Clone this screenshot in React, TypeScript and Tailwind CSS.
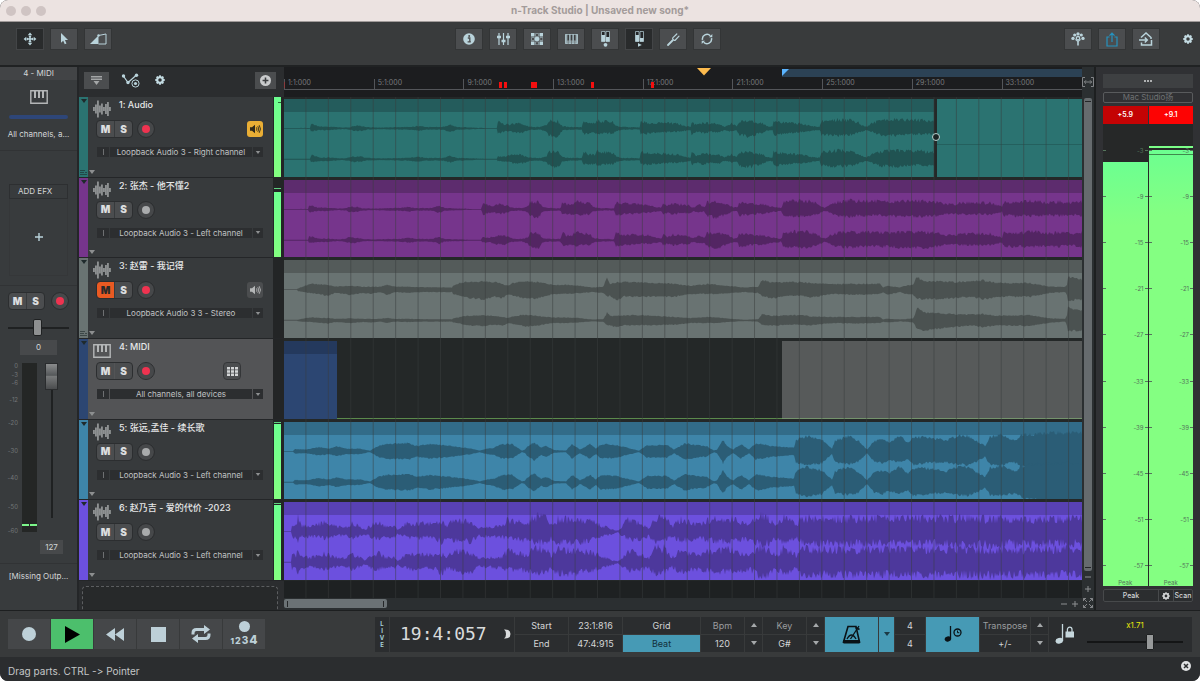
import type { ReactNode } from "react";
import clsx from "clsx";

type Point = [x: number, up: number, down?: number, second?: number];

interface Track {
  name: string;
  kind: "audio" | "midi";
  strip: string;
  device: string;
  armed: boolean;
  muted?: boolean;
  monitor?: "on" | "off";
  keypad?: boolean;
  routed?: boolean;
  level: number;
  peak?: number;
}

const LANE_WIDTH = 798;
const LANE_HEIGHT = 78;

const tracks: Track[] = [
  { name: "1: Audio", kind: "audio", strip: "bg-[#2b7371]", device: "Loopback Audio 3 - Right channel", armed: true, monitor: "on", routed: true, level: 100, peak: 92 },
  { name: "2: 张杰 - 他不懂2", kind: "audio", strip: "bg-[#76358c]", device: "Loopback Audio 3 - Left channel", armed: false, level: 82, peak: 86 },
  { name: "3: 赵雷 - 我记得", kind: "audio", strip: "bg-[#697372]", device: "Loopback Audio 3 3 - Stereo", armed: true, muted: true, monitor: "off", routed: true, level: 0 },
  { name: "4: MIDI", kind: "midi", strip: "bg-[#2c4672]", device: "All channels, all devices", armed: true, keypad: true, level: 0 },
  { name: "5: 张远,孟佳 - 续长歌", kind: "audio", strip: "bg-[#3e85a9]", device: "Loopback Audio 3 - Left channel", armed: false, level: 94, peak: 96 },
  { name: "6: 赵乃吉 - 爱的代价 -2023", kind: "audio", strip: "bg-[#6c50de]", device: "Loopback Audio 3 - Left channel", armed: false, level: 94, peak: 96 },
];

// envelope key points: x, level above the axis, level below, scale of the second channel
const songA: Point[] = [
  [0, 0.5], [26, 0.6], [27, 5, 4], [36, 2.2], [46, 2], [59, 1], [67, 1.6, 1.6, 1.4], [70, 3.4, 3], [78, 3], [84, 1.5], [96, 1],
  [126, 1.8], [134, 3], [143, 1.6], [159, 1.6], [167, 4.2], [173, 1.6], [189, 1], [201, 0.6], [213, 0.4],
  [214, 8.5, 6.5, 0.4], [221, 5, 4, 0.6], [226, 4.5, 4], [233, 6.5, 5.5], [239, 5], [246, 2], [256, 1.5], [263, 4], [265, 9, 8],
  [274, 9, 10], [279, 2.6], [285, 1.8], [298, 1.4], [300, 10, 7], [304, 6], [311, 6], [314, 10, 7], [324, 8, 6], [329, 8, 6], [333, 3], [338, 1.8],
  [356, 1.2], [357, 9, 7], [366, 7, 6], [379, 7, 5], [389, 6, 4], [394, 6, 4], [401, 3], [407, 2], [408, 8, 7], [413, 4], [419, 7, 6],
  [429, 6, 4], [436, 5], [441, 2], [448, 6, 4], [453, 2.5], [456, 9, 8], [466, 9, 10], [479, 6, 5], [484, 2.4], [489, 2.4],
  [490, 9, 8], [503, 7, 6], [516, 6, 5], [528, 3], [536, 1.8], [538, 9, 8], [554, 11, 9], [566, 10, 8], [574, 8, 6], [578, 4],
  [583, 2], [588, 6, 4], [596, 9, 8], [609, 11, 9], [623, 10, 8], [636, 10, 7], [652, 9, 8],
];

const songB: Point[] = [
  ...songA.map(([x, ...rest]): Point => [x * 0.928, ...rest]),
  [620, 10, 9], [649, 10, 9], [659, 7, 6], [669, 6, 5], [679, 8, 6], [706, 8, 6], [718, 3], [720, 9, 8], [736, 9, 8], [749, 11, 8],
  [763, 8, 7], [776, 10, 8], [786, 8, 6], [798, 10, 8],
];

const songC: Point[] = [
  [0, 0.4, 0.4, 0.6], [13, 0.4, 0.4, 0.6], [14, 1, 2, 0.6], [26, 6, 4, 0.5], [44, 5, 7, 0.5], [51, 3, 4, 0.5], [66, 4, 6, 0.5],
  [79, 3, 4, 0.5], [86, 3, 5, 0.5], [96, 3, 3, 0.5], [103, 5, 6, 0.5], [111, 3, 3, 0.5], [123, 3, 4, 0.5], [139, 2.4, 3, 0.5],
  [168, 2, 3, 0.5], [169, 4, 5, 0.5], [176, 7, 7, 0.5], [183, 8, 9, 0.6], [199, 9, 11, 0.6], [211, 8, 8, 0.6], [218, 6, 10, 0.6],
  [224, 4, 6, 0.6], [229, 7, 7, 0.6], [241, 9, 10, 0.7], [253, 8, 10, 0.6], [269, 5, 5, 0.6], [283, 5, 5, 0.6], [296, 4, 4, 0.6],
  [308, 2, 3, 0.4], [319, 3, 4, 0.4], [323, 12, 8, 0.7], [326, 6, 7, 0.8], [333, 8, 12, 0.6], [339, 8, 8, 0.7], [359, 8, 8, 0.7],
  [391, 6, 8, 0.6], [406, 4, 5, 0.6], [426, 6, 5, 0.6], [433, 5, 5, 0.6], [461, 2, 3, 0.3], [474, 3, 4, 0.4], [478, 10, 7, 0.7],
  [488, 8, 10, 0.6], [503, 8, 7, 0.7], [519, 8, 7, 0.7], [526, 7, 9, 0.6], [549, 6, 5, 0.6], [573, 6, 6, 0.6], [596, 6, 5, 0.6],
  [599, 2, 3, 0.5], [604, 4, 6, 0.4], [616, 2, 3, 0.4], [621, 4, 5, 0.3], [629, 5, 6, 0.4], [633, 14, 10, 1], [639, 9, 11, 1],
  [651, 9, 11, 0.9], [674, 8, 9, 0.8], [688, 9, 8, 0.7], [699, 10, 11, 0.7], [713, 7, 8, 0.7], [746, 7, 8, 0.8], [766, 3, 4, 0.7],
  [781, 3, 3, 0.5], [783, 5, 6, 1], [784, 14, 12, 1], [798, 11, 11, 1],
];

const songD: Point[] = [
  [0, 0.5], [9, 0.5], [11, 2.6], [22, 2], [35, 4.6], [45, 3], [53, 5.4], [63, 3], [76, 3], [86, 0.8], [94, 6], [102, 8], [125, 9],
  [133, 6], [146, 8], [166, 6], [187, 3], [196, 1], [203, 3], [210, 4], [218, 8], [228, 8], [238, 0.8], [241, 2], [243, 5], [250, 10],
  [257, 4], [262, 6], [270, 1.5], [282, 1], [288, 8], [296, 2], [306, 8], [312, 3], [317, 8], [332, 7], [355, 0.8], [363, 7],
  [383, 7], [390, 2], [401, 9], [411, 7], [422, 6], [430, 1], [433, 2], [439, 13], [443, 6], [449, 2], [457, 8], [465, 2],
  [472, 9], [487, 6], [510, 4], [512, 13], [523, 17, 15], [538, 13], [548, 3], [551, 12], [564, 17, 14], [574, 12], [583, 2],
  [590, 11], [598, 13], [605, 10], [616, 17, 12], [624, 9], [629, 15], [642, 16, 13], [662, 12], [673, 17, 14], [683, 17, 15],
  [693, 11], [701, 6], [706, 16, 14], [717, 18, 15], [732, 12], [737, 18, 17], [755, 20], [771, 21], [798, 21],
];

const songE: Point[] = [
  [0, 0.5], [7, 0.5], [8, 11, 9], [12, 8, 8], [14, 19, 15], [17, 8, 8], [27, 6, 7], [40, 12, 9], [53, 6, 6], [63, 6, 6],
  [68, 11, 9], [81, 3, 4], [89, 9, 9], [94, 13, 10], [102, 6, 7], [110, 7, 8], [114, 2, 4], [122, 10, 8], [133, 11, 10], [146, 10, 7],
  [159, 11, 15], [163, 6, 7], [169, 15, 12], [187, 12, 13], [195, 5, 6], [218, 7, 8], [223, 15, 10], [244, 10, 12], [249, 20, 14],
  [262, 19, 15], [267, 8, 9], [275, 18, 16], [290, 15, 15], [306, 14, 12], [316, 9, 8], [327, 3, 4], [334, 1, 1], [337, 5, 5],
  [345, 17, 11], [357, 10, 11], [365, 5, 6], [370, 20, 16], [381, 19, 12], [388, 6, 6], [396, 16, 13], [414, 9, 9], [425, 15, 12],
  [445, 17, 14], [466, 9, 10], [474, 22, 17], [484, 18, 17], [492, 8, 9], [500, 20, 15], [512, 9, 9], [518, 18, 16], [560, 17, 17],
  [610, 17, 16], [660, 18, 17], [700, 17, 18], [750, 16, 17], [798, 19, 16],
];

const sample = (points: Point[], x: number) => {
  const next = points.findIndex((p) => p[0] > x);
  const b = points[next < 0 ? points.length - 1 : next];
  const a = points[Math.max(0, (next < 0 ? points.length : next) - 1)];
  const t = b[0] === a[0] ? 0 : (x - a[0]) / (b[0] - a[0]);
  const mix = (from: number, to: number) => from + (to - from) * t;
  return {
    up: mix(a[1], b[1]),
    down: mix(a[2] ?? a[1], b[2] ?? b[1]),
    second: mix(a[3] ?? 1, b[3] ?? 1),
  };
};

const noise = (n: number) => {
  const v = Math.sin(n * 127.1 + 311.7) * 43758.5453;
  return v - Math.floor(v);
};

function wavePath(points: Point[], width: number, axis: number, channel: number, rough: number) {
  const top: string[] = [];
  const bottom: string[] = [];
  for (let x = 0; x <= width; x += 1) {
    const s = sample(points, x);
    const scale = channel === 1 ? s.second : 1;
    const up = s.up * scale * (1 - rough * noise(x + channel * 900));
    const down = s.down * scale * (1 - rough * noise(x + 5000 + channel * 900));
    top.push(`${x} ${(axis - Math.max(up, 0.4)).toFixed(1)}`);
    bottom.unshift(`${x} ${(axis + Math.max(down, 0.4)).toFixed(1)}`);
  }
  return `M${top.join("L")}L${bottom.join("L")}Z`;
}

function Waveform({ points, width = LANE_WIDTH, rough = 0.4, className }: { points: Point[]; width?: number; rough?: number; className: string }) {
  return (
    <svg viewBox={`0 0 ${width} ${LANE_HEIGHT}`} preserveAspectRatio="none" className={clsx("absolute inset-0 size-full", className)} fill="currentColor" aria-hidden="true">
      <path d={wavePath(points, width, 29.5, 0, rough)} />
      <path d={wavePath(points, width, 60.5, 1, rough)} />
    </svg>
  );
}

function Clip({ body, header, children, className }: { body: string; header: string; children?: ReactNode; className?: string }) {
  return (
    <div className={clsx("relative overflow-hidden", body, className)}>
      <div className={clsx("h-[13px]", header)} />
      {children}
    </div>
  );
}

function Triangle({ up, className }: { up?: boolean; className?: string }) {
  return (
    <svg viewBox="0 0 6 4" className={clsx("h-1 w-1.5", className)} fill="currentColor" aria-hidden="true">
      <path d={up ? "M0 4L3 0L6 4Z" : "M0 0L3 4L6 0Z"} />
    </svg>
  );
}

function GearIcon({ className }: { className?: string }) {
  return (
    <svg viewBox="0 0 20 20" className={className} aria-hidden="true">
      <circle cx="10" cy="10" r="5.5" fill="none" stroke="currentColor" strokeWidth="4" />
      {[0, 45, 90, 135].map((a) => (
        <g key={a} transform={`rotate(${a} 10 10)`} fill="currentColor">
          <rect x="8" y="0.5" width="4" height="4" rx="1" />
          <rect x="8" y="15.5" width="4" height="4" rx="1" />
        </g>
      ))}
    </svg>
  );
}

function PianoIcon({ className }: { className?: string }) {
  return (
    <svg viewBox="0 0 18 14" className={className} aria-hidden="true">
      <path d="M.8.8h16.4v12.4H.8z" fill="none" stroke="currentColor" strokeWidth="1.4" />
      <path d="M4 1v7h2V1zM8 1v7h2V1zM12 1v7h2V1z" fill="currentColor" />
    </svg>
  );
}

function WaveIcon({ className }: { className?: string }) {
  const bars = [4, 9, 17, 7, 11, 4, 10, 14, 4];
  return (
    <svg viewBox="0 0 18 18" className={className} fill="currentColor" aria-hidden="true">
      {bars.map((h, i) => (
        <rect key={i} x={i * 2 + 0.3} y={9 - h / 2} width="1.3" height={h} />
      ))}
    </svg>
  );
}

function SpeakerIcon() {
  return (
    <svg viewBox="0 0 12 10" className="h-2.5 w-3" aria-hidden="true">
      <path d="M1 3.3h2L6 .8v8.4L3 6.7H1z" fill="currentColor" />
      <path d="M7.4 3.4q1.2 1.6 0 3.2M8.8 2.2q2 2.8 0 5.6M10.2 1.2q2.6 3.8 0 7.6" fill="none" stroke="currentColor" strokeWidth=".9" />
    </svg>
  );
}

const toolIcons = {
  move: (
    <svg viewBox="0 0 14 14" className="size-3.5" fill="currentColor" aria-hidden="true">
      <path d="M7 .6L9.300 3.300H4.700zM7 13.400L4.700 10.700h4.600zM.6 7L3.300 4.700v4.600zM13.400 7L10.700 9.300V4.700z" />
      <circle cx="7" cy="4.700" r="1.200" /><circle cx="7" cy="9.300" r="1.200" /><circle cx="4.700" cy="7" r="1.200" /><circle cx="9.300" cy="7" r="1.200" /><circle cx="7" cy="7" r="1.200" />
    </svg>
  ),
  pointer: (
    <svg viewBox="0 0 10 14" className="h-3 w-2.5" fill="currentColor" aria-hidden="true"><path d="M1.5 0v11.4l2.6-2.4 1.8 4.2 2-.9L6.100 8.300h3.600z" /></svg>
  ),
  fade: (
    <svg viewBox="0 0 18 12" className="h-3 w-[18px]" aria-hidden="true">
      <path d="M1 11L9.500 2.500V11z" fill="currentColor" /><path d="M9.500 2.500L17 1V11H9.500" fill="none" stroke="currentColor" /><circle cx="9.500" cy="2.500" r="1.200" fill="currentColor" />
    </svg>
  ),
  info: (
    <svg viewBox="0 0 12 12" className="size-3" aria-hidden="true">
      <circle cx="6" cy="6" r="5.800" fill="currentColor" /><path d="M4.800 5h2v3.600h.900M4.600 8.800h3.200" stroke="#4b4d4f" strokeWidth="1.300" fill="none" /><circle cx="6.200" cy="2.900" r="1" fill="#4b4d4f" />
    </svg>
  ),
  mixer: (
    <svg viewBox="0 0 13 12" className="h-3 w-[13px]" stroke="currentColor" strokeWidth="1.200" aria-hidden="true">
      <path d="M2 0v12M6.500 0v12M11 0v12" /><path d="M0 4h4M4.500 8h4M9 4h4" strokeWidth="2.400" />
    </svg>
  ),
  pads: (
    <svg viewBox="0 0 12 12" className="size-3" aria-hidden="true">
      <path d="M0 0h3.500v3.500H0zM8.500 0H12v3.500H8.500zM4.300 4.300h3.500v3.500H4.300zM0 8.500h3.500V12H0zM8.500 8.500H12V12H8.500z" fill="currentColor" />
      <path d="M4.500.5h3v3h-3zM.5 4.500h3v3h-3zM8.800 4.500h3v3h-3zM4.500 8.800h3v3h-3z" fill="none" stroke="currentColor" strokeWidth=".7" opacity=".7" />
      <circle cx="6" cy="6" r="2.300" fill="currentColor" />
    </svg>
  ),
  keys: (
    <svg viewBox="0 0 13 10" className="h-2.5 w-[13px]" aria-hidden="true">
      <path d="M.4.4h12.200v9.200H.4z" fill="currentColor" fillOpacity=".7" stroke="currentColor" strokeWidth=".8" />
      <path d="M2.400 .8h1.600v5.600H2.400zM5.700 .8h1.600v5.600H5.700zM9 .8h1.600v5.600H9z" fill="#3c3e40" /><path d="M3.200 6v4M6.500 6v4M9.800 6v4" stroke="#5a5c5e" strokeWidth=".6" />
    </svg>
  ),
  recordMeter: (
    <svg viewBox="0 0 9 16" className="h-4 w-[9px]" aria-hidden="true">
      <path d="M.5.5h3.500v10H.5zM5 .5h3.500v10H5z" fill="#242628" stroke="currentColor" strokeWidth=".7" /><path d="M.5 4h3.500v6.500H.5zM5 6h3.500v4.500H5z" fill="currentColor" /><circle cx="4.500" cy="13.800" r="1.900" fill="currentColor" />
    </svg>
  ),
  playMeter: (
    <svg viewBox="0 0 9 16" className="h-4 w-[9px]" aria-hidden="true">
      <path d="M.5.5h3.500v10H.5zM5 .5h3.500v10H5z" fill="#242628" stroke="currentColor" strokeWidth=".7" /><path d="M.5 4h3.500v6.500H.5zM5 7h3.500v3.500H5z" fill="currentColor" /><path d="M3 12l3.800 1.900L3 15.800z" fill="currentColor" />
    </svg>
  ),
  tuner: (
    <svg viewBox="0 0 13 13" className="size-[13px]" fill="none" stroke="currentColor" strokeLinecap="round" aria-hidden="true">
      <path d="M1 12L5.500 7.500" strokeWidth="1.800" /><path d="M9.800 1L6 4.600C4.700 5.800 7.200 8.400 8.400 7L12 3.200" strokeWidth="1.200" />
    </svg>
  ),
  sync: (
    <svg viewBox="0 0 12 12" className="size-3" aria-hidden="true">
      <path d="M1.500 6.800A4.600 4.600 0 0 1 9.300 2.800M10.500 5.200A4.600 4.600 0 0 1 2.700 9.200" fill="none" stroke="currentColor" strokeWidth="1.500" /><path d="M8 4.300h3.300V1zM4 7.700H.7V11z" fill="currentColor" />
    </svg>
  ),
  community: (
    <svg viewBox="0 0 14 14" className="size-3.5" fill="currentColor" aria-hidden="true">
      <circle cx="7" cy="1.900" r="1.700" /><circle cx="3.700" cy="3" r="1.600" /><circle cx="10.300" cy="3" r="1.600" /><circle cx="2" cy="6.400" r="1.700" /><circle cx="12" cy="6.400" r="1.700" /><circle cx="7" cy="6.200" r="1.700" fill="none" stroke="currentColor" strokeWidth="1.300" /><path d="M6.200 8h1.600v5.500H6.200z" /><path d="M4.200 7.500L6.500 9.500M9.800 7.500L7.500 9.500" stroke="currentColor" strokeWidth="1" />
    </svg>
  ),
  share: (
    <svg viewBox="0 0 12 15" className="h-[15px] w-3" fill="none" stroke="currentColor" strokeWidth="1.200" aria-hidden="true">
      <path d="M3.500 5H1v9h10V5H8.500M6 10V1.200M3.500 3.700L6 1.200l2.500 2.500" />
    </svg>
  ),
  exportHome: (
    <svg viewBox="0 0 16 14" className="h-3.5 w-4" fill="none" stroke="currentColor" strokeWidth="1.500" aria-hidden="true">
      <path d="M3 5.500L8 1l5 4.500V7M3.500 10.500V13h10V8M1 8h8M6.800 5.500L9.300 8l-2.500 2.500" />
    </svg>
  ),
};

function ToolButton({ label, active, accent, children }: { label: string; active?: boolean; accent?: boolean; children: ReactNode }) {
  return (
    <button
      aria-label={label}
      className={clsx(
        "flex h-[22px] w-7 items-center justify-center border",
        active ? "border-[#434547] bg-[#292b2c]" : "border-[#333536] bg-[#4b4d4f]",
        accent ? "text-[#2593c0]" : "text-[#b9d3db]"
      )}
    >
      {children}
    </button>
  );
}

function MuteSolo({ muted }: { muted?: boolean }) {
  const base = "h-4 w-[17px] text-[10px] leading-[15px] font-black";
  return (
    <div className="flex gap-px rounded-[3px] outline outline-[#2c2e30]">
      <button aria-label="Mute" className={clsx(base, "rounded-l-[2px]", muted ? "bg-[#ea5a22] text-[#2a2a2a]" : "bg-[#4b4d4f] text-[#dcdedf]")}>M</button>
      <button aria-label="Solo" className={clsx(base, "rounded-r-[2px] bg-[#4b4d4f] text-[#dcdedf]")}>S</button>
    </div>
  );
}

function RecordButton({ armed }: { armed: boolean }) {
  return (
    <button aria-label="Arm for recording" className="flex size-4 items-center justify-center rounded-full bg-[#46484a] outline outline-[#2c2e30]">
      <span className={clsx("size-2 rounded-full", armed ? "bg-[#ef3350]" : "bg-[#a9abac]")} />
    </button>
  );
}

function Titlebar() {
  return (
    <header className="relative flex h-[22px] items-center justify-center border-b border-[#a09a99] bg-[#ece3e1]">
      <div className="absolute left-1.5 flex gap-[5px]">
        <span className="size-2.5 rounded-full bg-[#cfc4c3]" />
        <span className="size-2.5 rounded-full bg-[#cfc4c3]" />
        <span className="size-2.5 rounded-full bg-[#cfc4c3]" />
      </div>
      <h1 className="text-[10px] font-bold text-[#a39b9a]">n-Track Studio | Unsaved new song*</h1>
    </header>
  );
}

function Toolbar() {
  return (
    <nav className="flex h-[43px] items-start justify-between bg-[#393b3c] pt-1.5 pr-[7px] pl-4">
      <div className="flex gap-1.5">
        <ToolButton label="Move" active>{toolIcons.move}</ToolButton>
        <ToolButton label="Pointer">{toolIcons.pointer}</ToolButton>
        <ToolButton label="Fade">{toolIcons.fade}</ToolButton>
      </div>
      <div className="flex gap-1.5">
        <ToolButton label="Info">{toolIcons.info}</ToolButton>
        <ToolButton label="Mixer">{toolIcons.mixer}</ToolButton>
        <ToolButton label="Step sequencer">{toolIcons.pads}</ToolButton>
        <ToolButton label="Keyboard">{toolIcons.keys}</ToolButton>
        <ToolButton label="Input meters">{toolIcons.recordMeter}</ToolButton>
        <ToolButton label="Output meters" active>{toolIcons.playMeter}</ToolButton>
        <ToolButton label="Tuner">{toolIcons.tuner}</ToolButton>
        <ToolButton label="Sync">{toolIcons.sync}</ToolButton>
      </div>
      <div className="flex items-center gap-1.5">
        <ToolButton label="Community">{toolIcons.community}</ToolButton>
        <ToolButton label="Share" accent>{toolIcons.share}</ToolButton>
        <ToolButton label="Export">{toolIcons.exportHome}</ToolButton>
        <button aria-label="Settings" className="ml-[17px] text-[#c3dbe2]">
          <GearIcon className="size-[10px]" />
        </button>
      </div>
    </nav>
  );
}

// label and the share of the fader's travel down to the next one
const faderScale: [string, number][] = [["0", 9], ["-3", 8], ["-6", 17], ["-12", 23], ["-20", 28], ["-30", 28], ["-40", 29], ["-50", 24], ["-60", 4]];

function ChannelStrip() {
  return (
    <aside className="flex w-[79px] shrink-0 flex-col border-r-2 border-[#242628] bg-[#383b3d] text-[8px] text-[#d4d6d7]">
      <div className="h-[13px] bg-[#424446] text-center text-[8px] leading-[13px]">4 - MIDI</div>
      <PianoIcon className="mx-auto mt-[10px] h-3.5 w-[18px] text-[#b4b6b7]" />
      <div className="mx-[9px] mt-[11px] h-1 rounded-sm bg-[#2e4678]" />
      <p className="mt-[9px] text-center leading-3 whitespace-nowrap">All channels, a...</p>
      <div className="mt-2.5 border-t border-[#313335]" />
      <div className="mx-[9px] mt-[33px] h-[15px] border border-[#2d2f31] pl-2 text-[8px] leading-[13px]">ADD EFX</div>
      <button aria-label="Add effect" className="mx-[9px] flex h-[77px] items-center justify-center border border-t-0 border-[#353739] text-[#b9d3db]">
        <svg viewBox="0 0 8 8" className="size-2" stroke="currentColor" strokeWidth="1.400" aria-hidden="true"><path d="M4 0v8M0 4h8" /></svg>
      </button>
      <div className="mt-[9px] border-t border-[#313335]" />
      <div className="mt-[7px] flex items-center justify-between pr-[9px] pl-[9px]">
        <MuteSolo />
        <RecordButton armed />
      </div>
      <input
        type="range"
        aria-label="Pan"
        defaultValue={49}
        className="mx-2 mt-[10px] h-[17px] appearance-none bg-[linear-gradient(#1f2122,#1f2122)] bg-size-[100%_2px] bg-center bg-no-repeat [&::-webkit-slider-thumb]:h-[17px] [&::-webkit-slider-thumb]:w-[9px] [&::-webkit-slider-thumb]:appearance-none [&::-webkit-slider-thumb]:rounded-[2px] [&::-webkit-slider-thumb]:border [&::-webkit-slider-thumb]:border-[#1f2122] [&::-webkit-slider-thumb]:bg-[#8e9091]"
      />
      <output className="mx-auto mt-1 h-[15px] w-[37px] bg-[#47494b] text-center leading-[15px]">0</output>
      <div className="mt-2 flex min-h-0 flex-1">
        <div className="flex w-[18px] flex-col text-right text-[6px] leading-none text-[#737678]">
          {faderScale.map(([label, span]) => (
            <div key={label} className="min-h-0 basis-0" style={{ flexGrow: span }}>{label}</div>
          ))}
        </div>
        <div className="ml-1 flex w-[15px] items-end gap-px bg-[#242625] pb-1.5">
          <div className="h-0.5 flex-1 bg-[#7cf58a]" />
          <div className="h-0.5 flex-1 bg-[#7cf58a]" />
        </div>
        <input
          type="range"
          aria-label="Volume"
          max={127}
          defaultValue={127}
          className="mb-3.5 ml-2 w-[13px] appearance-none bg-[linear-gradient(#1f2122,#1f2122)] bg-size-[2px_100%] bg-center bg-no-repeat [direction:rtl] [writing-mode:vertical-lr] [&::-webkit-slider-thumb]:h-[27px] [&::-webkit-slider-thumb]:w-[13px] [&::-webkit-slider-thumb]:appearance-none [&::-webkit-slider-thumb]:border [&::-webkit-slider-thumb]:border-[#2a2c2e] [&::-webkit-slider-thumb]:bg-[linear-gradient(#8a8c8d,#55585a_45%,#77797a_50%,#4a4c4e)]"
        />
      </div>
      <output className="mt-2 mr-3.5 h-[14px] w-[23px] self-end bg-[#47494b] text-center leading-[14px]">127</output>
      <div className="mt-[9px] border-t border-[#313335]" />
      <p className="mt-1.5 h-10 text-center leading-3 whitespace-nowrap">[Missing Outp...</p>
    </aside>
  );
}

function TrackRow({ track }: { track: Track }) {
  return (
    <li className="flex min-h-0 flex-1 border-b border-[#242628]">
      <div className={clsx("flex w-[9px] flex-col items-center justify-between py-0.5 text-[#1f2a2c]", track.strip)}>
        <Triangle />
        {track.routed && (
          <svg viewBox="0 0 7 5" className="h-[5px] w-[7px] opacity-60" stroke="currentColor" aria-hidden="true"><path d="M0 .5h5M0 2.500h4M0 4.500h7M5 2.500h2" /></svg>
        )}
      </div>
      <div className={clsx("flex min-w-0 flex-1 flex-col pt-[3px]", track.kind === "midi" ? "bg-[#535456]" : "bg-[#373a3c]")}>
        <div className="flex h-[21px] pl-[5px]">
          {track.kind === "midi" ? (
            <PianoIcon className="mt-0.5 h-3.5 w-[18px] text-[#b4b6b7]" />
          ) : (
            <WaveIcon className="size-[18px] text-[#b4b6b7]" />
          )}
          <span className="ml-2 text-[9px] leading-[10px] font-medium text-[#e6e7e8]">{track.name}</span>
        </div>
        <div className="flex h-4 items-center pr-[10px] pl-[9px]">
          <MuteSolo muted={track.muted} />
          <div className="ml-[6px]"><RecordButton armed={track.armed} /></div>
          {track.monitor && (
            <button
              aria-label="Monitor input"
              className={clsx("ml-auto flex size-4 items-center justify-center rounded-[3px]", track.monitor === "on" ? "bg-[#e9ae35] text-[#2f2a1a]" : "bg-[#4b4d4f] text-[#b4b6b7]")}
            >
              <SpeakerIcon />
            </button>
          )}
          {track.keypad && (
            <button aria-label="Open step editor" className="mr-[23px] ml-auto flex size-4 items-center justify-center rounded-[3px] bg-[#4b4d4f] text-[#d4d6d7] outline outline-[#343638]">
              <svg viewBox="0 0 11 9" className="h-[9px] w-[11px]" fill="currentColor" aria-hidden="true">
                <path d="M0 0h3v2.400H0zM4 0h3v2.400H4zM8 0h3v2.400H8zM0 3.300h3v2.400H0zM4 3.300h3v2.400H4zM8 3.300h3v2.400H8zM0 6.600h3V9H0zM4 6.600h3V9H4zM8 6.600h3V9H8z" />
              </svg>
            </button>
          )}
        </div>
        <div className="mt-[10px] mr-[10px] ml-[9px] flex h-[10px] gap-px">
          <button aria-label="Input options" className="flex w-3 items-center justify-center bg-[#2c2e30]">
            <span className="h-1.5 w-px bg-[#6e7072]" />
          </button>
          <select aria-label={`Input of ${track.name}`} className="min-w-0 flex-1 appearance-none bg-[#2c2e30] text-center text-[8px] leading-[10px] text-[#c0c2c3]">
            <option>{track.device}</option>
          </select>
          <span className="flex w-2.5 items-center justify-center bg-[#2c2e30] text-[#8d8f90]"><Triangle className="h-[3px]" /></span>
        </div>
        <Triangle className="mt-auto mb-[3px] ml-px text-[#8d8f90]" />
      </div>
      <div className="flex w-[11px] flex-col justify-end bg-[#232526] pr-[3px] pl-px">
        <div className="relative flex flex-1 flex-col justify-end">
          <div className="bg-linear-to-b from-[#6cff90] to-[#83ff80]" style={{ height: `${track.level}%` }} />
          {track.peak && (
            <div
              className={clsx("absolute inset-x-0 h-px", track.peak > track.level ? "bg-[#5fd080]" : "ml-1 bg-[#2a6a3a]")}
              style={{ bottom: `${track.peak}%` }}
            />
          )}
        </div>
      </div>
    </li>
  );
}

function TrackPanel() {
  return (
    <section className="flex w-[205px] shrink-0 flex-col bg-[#2b2d2f]">
      <div className="flex h-[30px] items-center bg-[#2b2d2f] pr-2 pb-1 pl-[5px]">
        <button aria-label="Track list options" className="flex h-[17px] w-[25px] items-center justify-center bg-[#4b4d4f] text-[#a4a6a7]">
          <svg viewBox="0 0 11 9" className="h-[9px] w-[11px]" fill="currentColor" aria-hidden="true"><path d="M0 0h11v1.500H0zM0 2.500h11V4H0zM2.500 5h6l-3 4z" /></svg>
        </button>
        <button aria-label="Automation" className="ml-3 text-[#b9d3db]">
          <svg viewBox="0 0 20 15" className="h-[15px] w-5" fill="none" stroke="currentColor" aria-hidden="true">
            <path d="M2 2.500L7 9.500L15.500 2" strokeWidth="1.200" />
            <g fill="currentColor" stroke="none"><circle cx="2.500" cy="3" r="1.700" /><circle cx="7" cy="9.500" r="1.700" /><circle cx="15.500" cy="2.200" r="1.700" /><circle cx="14.500" cy="10.500" r="1.600" /></g>
            <circle cx="14.500" cy="10.500" r="3.600" />
          </svg>
        </button>
        <button aria-label="Track settings" className="ml-[14px] text-[#c3dbe2]"><GearIcon className="size-[10px]" /></button>
        <button aria-label="Add track" className="ml-auto flex h-[17px] w-[21px] items-center justify-center bg-[#4b4d4f]">
          <svg viewBox="0 0 12 12" className="size-[11px]" aria-hidden="true"><circle cx="6" cy="6" r="6" fill="#c9cbcc" /><path d="M6 2.800v6.400M2.800 6h6.400" stroke="#3c3e40" strokeWidth="1.700" /></svg>
        </button>
      </div>
      <ul className="flex min-h-0 flex-1 flex-col">
        {tracks.map((track) => <TrackRow key={track.name} track={track} />)}
      </ul>
      <div className="h-[29px] pt-[5px] pr-1.5 pl-[3px]">
        <div className="h-full rounded-t-[4px] border border-b-0 border-dashed border-[#5c5e60] bg-[#27292a]" />
      </div>
    </section>
  );
}

const measures = [1, 5, 9, 13, 17, 21, 25, 29, 33];
const markers = [215, 220, 247, 250, 307, 367];

function Ruler() {
  return (
    <div className="relative h-[30px] overflow-hidden bg-[#1c1d1f]">
      <div className="ml-auto h-2 w-[37.6%] translate-y-0.5 bg-[#2c4255]">
        <svg viewBox="0 0 7 7" className="size-[7px]" fill="#5ab4ff" aria-hidden="true"><path d="M0 0h7L0 7z" /></svg>
      </div>
      <div className="mt-1 flex h-[11px] border-b border-[#54565a] text-[7px] leading-[8px] text-[#77797c]">
        {measures.map((m) => (
          <div key={m} className="w-[11.24%] shrink-0 border-l border-[#54565a] pl-[3px]">{m}:1:000</div>
        ))}
      </div>
      <svg viewBox="0 0 798 30" preserveAspectRatio="none" className="absolute inset-0 size-full" aria-hidden="true">
        {markers.map((x) => <rect key={x} x={x} y="15" width="3" height="6" fill="#f40f0f" />)}
        <path d="M413 1h14l-7 7.500z" fill="#fdbb4e" />
        <path d="M0 15v6" stroke="#c02020" />
      </svg>
    </div>
  );
}

function GridLines() {
  return (
    <svg viewBox="0 0 798 100" preserveAspectRatio="none" className="pointer-events-none absolute inset-0 size-full" aria-hidden="true">
      {Array.from({ length: 35 }, (_, i) => (
        <path key={i} d={`M${(i + 1) * 22.43 - 0.5} 0V100`} stroke="#3a3d3d" strokeOpacity=".5" vectorEffect="non-scaling-stroke" />
      ))}
    </svg>
  );
}

function Timeline() {
  const lane = "flex min-h-0 flex-1 pt-0.5 pb-px";
  return (
    <section className="flex min-w-0 flex-1 flex-col bg-[#2a2c2e]">
      <Ruler />
      <div className="relative flex min-h-0 flex-1 flex-col bg-[#242828]">
        <div className={lane}>
          <Clip body="bg-[#2b7371]" header="bg-[#245c5c]" className="w-[81.5%]">
            <Waveform points={songA} width={651} className="text-[#205352]" />
          </Clip>
          <div className="relative ml-[3px] flex-1 bg-[#2b7371]">
            <div className="absolute inset-x-0 top-[45px] h-px bg-[#24605e]" />
            <div className="absolute top-[34px] -left-[5px] z-10 size-2 rounded-full border border-[#b9d3d0] bg-[#1b2424]" />
          </div>
        </div>
        <div className={lane}>
          <Clip body="bg-[#76358c]" header="bg-[#5d2c6e]" className="flex-1">
            <Waveform points={songB} className="text-[#532563]" />
          </Clip>
        </div>
        <div className={lane}>
          <Clip body="bg-[#697372]" header="bg-[#545b5a]" className="flex-1">
            <Waveform points={songC} rough={0.2} className="text-[#4b5251]" />
          </Clip>
        </div>
        <div className={lane}>
          <Clip body="bg-[#2c4672]" header="bg-[#24395d]" className="w-[6.7%]" />
          <div className="w-[55.7%] border-b border-[#5b8a4c]" />
          <div className="flex-1 border-b border-[#74936c] bg-[#575a5a]" />
        </div>
        <div className={lane}>
          <Clip body="bg-[#3e85a9]" header="bg-[#326c89]" className="flex-1">
            <Waveform points={songD} rough={0.2} className="text-[#2b5d76]" />
          </Clip>
        </div>
        <div className={lane}>
          <Clip body="bg-[#6c50de]" header="bg-[#5841b4]" className="flex-1">
            <Waveform points={songE} rough={0.55} className="text-[#4d389c]" />
          </Clip>
        </div>
        <GridLines />
      </div>
      <div className="relative h-[17px] bg-[#1e2122]"><GridLines /></div>
      <div className="flex h-3 items-center bg-[#2b2f31] pb-px">
        <div className="flex h-[9px] w-[12.9%] items-center justify-between rounded-[2px] bg-[#6b7275] px-[3px]">
          <span className="h-1.5 w-px bg-[#242628]" />
          <span className="h-1.5 w-px bg-[#242628]" />
        </div>
        <div className="mr-1 ml-auto flex gap-[5px] text-[#8d9092]">
          <button aria-label="Zoom out"><svg viewBox="0 0 6 6" className="size-1.5" stroke="currentColor" aria-hidden="true"><path d="M0 3h6" /></svg></button>
          <button aria-label="Zoom in"><svg viewBox="0 0 6 6" className="size-1.5" stroke="currentColor" aria-hidden="true"><path d="M0 3h6M3 0v6" /></svg></button>
        </div>
      </div>
    </section>
  );
}

function VerticalScroll() {
  return (
    <div className="flex w-[14px] shrink-0 flex-col items-center border-r-2 border-[#1d1f20] bg-[#2b2f31] text-[#8d9092]">
      <button aria-label="Fit width" className="mt-2.5 mb-2.5">
        <svg viewBox="0 0 12 10" className="h-2.5 w-3" fill="none" stroke="currentColor" strokeWidth=".9" aria-hidden="true"><path d="M3 .5H.5v9H3M9 .5h2.500v9H9M2.500 5h7M4 3.300L2.300 5L4 6.700M8 3.300L9.700 5L8 6.700" /></svg>
      </button>
      <div className="mt-px flex w-2 flex-1 flex-col items-center justify-between rounded-[2px] bg-[#666b6e] py-[3px]">
        <span className="h-px w-1.5 bg-[#242628]" />
        <span className="h-px w-1.5 bg-[#242628]" />
      </div>
      <div className="flex flex-col items-center gap-1.5 pt-[3px] pb-0.5">
        <button aria-label="Shorter tracks"><svg viewBox="0 0 6 6" className="size-1.5" stroke="currentColor" aria-hidden="true"><path d="M0 3h6" /></svg></button>
        <button aria-label="Taller tracks"><svg viewBox="0 0 6 6" className="size-1.5" stroke="currentColor" aria-hidden="true"><path d="M0 3h6M3 0v6" /></svg></button>
        <button aria-label="Fit all">
          <svg viewBox="0 0 10 10" className="size-2.5" fill="none" stroke="currentColor" strokeWidth=".9" aria-hidden="true"><path d="M.5 3V.5H3M.5.5L4 4M7 .5h2.500V3M9.500.5L6 4M.5 7v2.500H3M.5 9.500L4 6M7 9.500h2.500V7M9.500 9.500L6 6" /></svg>
        </button>
      </div>
    </div>
  );
}

const dbMarks = [-3, -9, -15, -21, -27, -33, -39, -45, -51, -57];

function DbScale() {
  return (
    <div className="absolute inset-x-0 top-[3px] -bottom-[3px] flex flex-col text-[6px] text-[#55755c]">
      {dbMarks.map((db) => (
        <div key={db} className="flex flex-1 items-center">
          <span className="h-px w-[3px] bg-current" />
          <span className="mr-px ml-auto">{db}</span>
          <span className="h-px w-[3px] bg-current" />
        </div>
      ))}
    </div>
  );
}

function OutputMeters() {
  return (
    <aside className="flex w-[104px] shrink-0 flex-col bg-[#303134] pt-[7px] pr-[7px] pb-2 pl-[7px] text-[8px] text-[#d4d6d7]">
      <button aria-label="Output options" className="flex h-3.5 items-center justify-center gap-px bg-[#3e4042]">
        <span className="size-0.5 rounded-full bg-[#d4d6d7]" />
        <span className="size-0.5 rounded-full bg-[#d4d6d7]" />
        <span className="size-0.5 rounded-full bg-[#d4d6d7]" />
      </button>
      <div className="mt-1 h-[11px] rounded-[2px] border border-[#595b5d] text-center leading-[9px] text-[#6f7173]">Mac Studio扬</div>
      <div className="mt-[3px] flex h-[18px] gap-px text-center text-[7px] leading-[18px] font-semibold text-white">
        <div className="flex-1 bg-[#c40304]">+5.9</div>
        <div className="flex-1 bg-[#fd0303]">+9.1</div>
      </div>
      <div className="flex min-h-0 flex-1 gap-px overflow-hidden bg-[#262828]">
        <div className="relative flex flex-1 flex-col justify-end">
          <div className="h-[91.7%] bg-linear-to-b from-[#6cff90] to-[#84ff82] to-15%" />
          <DbScale />
          <span className="absolute inset-x-0 bottom-0 text-center text-[6px] leading-[6px] text-[#55755c]">Peak</span>
        </div>
        <div className="relative flex flex-1 flex-col justify-end">
          <div className="mb-0.5 h-0.5 bg-[#7cff88]" />
          <div className="h-[94.3%] bg-linear-to-b from-[#6cff90] to-[#84ff82] to-15% pt-1"><div className="h-px bg-[#3f8a4c]" /></div>
          <DbScale />
          <span className="absolute inset-x-0 bottom-0 text-center text-[6px] leading-[6px] text-[#55755c]">Peak</span>
        </div>
      </div>
      <div className="mt-[3px] flex h-[13px] divide-x divide-[#47494b] rounded-[2px] border border-[#47494b] bg-[#2b2d2f] text-[7px] leading-[11px] font-medium">
        <button className="flex-1">Peak</button>
        <button aria-label="Meter settings" className="flex w-[15px] items-center justify-center"><GearIcon className="size-2" /></button>
        <button className="w-[18px] text-center">Scan</button>
      </div>
    </aside>
  );
}

function TransportButton({ label, active, children }: { label: string; active?: boolean; children: ReactNode }) {
  return (
    <button aria-label={label} className={clsx("flex h-[30px] w-[42px] items-center justify-center", active ? "bg-[#4cbf6c] text-black" : "bg-[#454749] text-[#bdd0d8]")}>
      {children}
    </button>
  );
}

function Stepper({ label, value, className }: { label: string; value: string; className: string }) {
  const arrow = "flex h-[17px] w-[17px] items-center justify-center bg-[#2b2d2f] text-[#a5a8aa]";
  return (
    <div className="flex gap-px">
      <div className={clsx("flex flex-col gap-px text-center leading-[17px]", className)}>
        <div className="h-[17px] bg-[#2b2d2f] text-[#9a9c9e]">{label}</div>
        <div className="h-[17px] bg-[#2b2d2f]">{value}</div>
      </div>
      <div className="flex flex-col gap-px">
        <button aria-label={`${label} up`} className={arrow}><Triangle up /></button>
        <button aria-label={`${label} down`} className={arrow}><Triangle /></button>
      </div>
    </div>
  );
}

function Transport() {
  const cell = "h-[17px] bg-[#2b2d2f]";
  return (
    <section className="flex h-[47px] items-center justify-between border-t border-[#1d1f20] bg-[#383a3b] pr-2 pl-2">
      <div className="flex gap-px">
        <TransportButton label="Record"><span className="size-3.5 rounded-full bg-current" /></TransportButton>
        <TransportButton label="Play" active>
          <svg viewBox="0 0 15 17" className="h-[17px] w-[15px]" fill="currentColor" aria-hidden="true"><path d="M0 0L15 8.500L0 17z" /></svg>
        </TransportButton>
        <TransportButton label="Rewind">
          <svg viewBox="0 0 18 13" className="h-[13px] w-[18px]" fill="currentColor" aria-hidden="true"><path d="M0 6.500L9 0v13zM9 6.500L18 0v13z" /></svg>
        </TransportButton>
        <TransportButton label="Stop"><span className="size-[15px] bg-current" /></TransportButton>
        <TransportButton label="Loop">
          <svg viewBox="0 0 20 18" className="h-[18px] w-5" aria-hidden="true">
            <path d="M2 9.500V8Q2 4.500 5.500 4.500H14M18 8.500V10Q18 13.500 14.500 13.500H6" fill="none" stroke="currentColor" strokeWidth="3" />
            <path d="M13 0l6 4.500L13 9zM7 9L1 13.500L7 18z" fill="currentColor" />
          </svg>
        </TransportButton>
        <TransportButton label="Count in">
          <span className="flex flex-col items-center">
            <span className="mt-0.5 size-[11px] rounded-full bg-current" />
            <span className="flex items-baseline gap-px leading-[15px] font-extrabold">
              <span className="text-[8px]">1</span>
              <span className="text-[9px]">2</span>
              <span className="text-[10px]">3</span>
              <span className="text-[12px]">4</span>
            </span>
          </span>
        </TransportButton>
      </div>
      <div className="flex h-[35px] gap-px text-[9px] text-[#d4d6d7]">
        <button aria-label="Live" className="flex w-3.5 flex-col items-center justify-center bg-[#2b2d2f] text-[6px] leading-[7px] font-bold text-[#a9d3d8]">
          <span className="block h-[7px]">L</span>
          <span className="block h-[7px]">I</span>
          <span className="block h-[7px]">V</span>
          <span className="block h-[7px]">E</span>
        </button>
        <div className="flex w-[124px] items-center justify-between bg-[#2b2d2f] pr-[3px] pl-2.5">
          <output className="font-['DejaVu_Sans_Mono',monospace] text-[18px] leading-none text-[#d9dbdc]">19:4:057</output>
          <svg viewBox="0 0 7 10" className="h-2.5 w-[7px]" fill="#d9dbdc" aria-hidden="true"><path d="M0 .5Q6.500 0 6.500 5Q6.500 10 0 9.500Q2 8.500 2 5Q2 1.500 0 .5z" /></svg>
        </div>
        <div className="grid grid-cols-[53px_53px] gap-px text-center leading-[17px]">
          <div className={cell}>Start</div>
          <div className={cell}>23:1:816</div>
          <div className={cell}>End</div>
          <div className={cell}>47:4:915</div>
        </div>
        <div className="flex w-[77px] flex-col gap-px leading-[17px]">
          <button className="h-[17px] bg-[#2b2d2f]">Grid</button>
          <button className="h-[17px] bg-[#469ab5] text-[#12303b]">Beat</button>
        </div>
        <Stepper label="Bpm" value="120" className="w-[43px]" />
        <Stepper label="Key" value="G#" className="w-[43px]" />
        <div className="flex gap-px">
          <button aria-label="Metronome" className="flex w-[53px] items-center justify-center bg-[#469ab5] text-[#0a1216]">
            <svg viewBox="0 0 19 19" className="size-[19px]" fill="none" stroke="currentColor" strokeWidth="1.600" aria-hidden="true">
              <path d="M6 1.500h8L17.500 17H1.500z" /><path d="M1.500 15.500h16V18h-16z" fill="currentColor" strokeWidth="1" /><path d="M5 14q4.500-8 9 0M8.500 14L17 1" strokeWidth="1.300" /><path d="M13.500 2.500l4 2" strokeWidth="1.800" />
            </svg>
          </button>
          <button aria-label="Metronome options" className="flex w-[15px] items-center justify-center bg-[#469ab5] text-[#1c3a45]"><Triangle /></button>
        </div>
        <div className="flex w-[30px] flex-col gap-px text-center leading-[17px]">
          <div className={cell}>4</div>
          <div className={cell}>4</div>
        </div>
        <button aria-label="Tap tempo" className="flex w-[53px] items-center justify-center bg-[#469ab5] text-[#0a1216]">
          <svg viewBox="0 0 18 16" className="h-4 w-[18px]" aria-hidden="true">
            <path d="M6.500 0v12.500" stroke="currentColor" strokeWidth="1.300" /><ellipse cx="3.900" cy="13" rx="3.300" ry="2.500" fill="currentColor" transform="rotate(-15 3.900 13)" />
            <circle cx="13.500" cy="6.500" r="3.500" fill="none" stroke="currentColor" strokeWidth="1.300" /><path d="M13.500 4.500v2.200h1.800" fill="none" stroke="currentColor" />
          </svg>
        </button>
        <Stepper label="Transpose" value="+/-" className="w-[50px]" />
        <div className="flex w-[143px] bg-[#2b2d2f]">
          <button aria-label="Lock pitch" className="ml-1.5 text-[#c5d6dc]">
            <svg viewBox="0 0 20 20" className="size-5" aria-hidden="true">
              <path d="M7.500 0v17" stroke="currentColor" strokeWidth="1.300" /><ellipse cx="4.300" cy="16.800" rx="3.800" ry="2.800" fill="currentColor" transform="rotate(-15 4.300 16.800)" />
              <path d="M10.500 7.500H19V13.500H10.500z" fill="currentColor" /><path d="M12.400 8V5.500a2.300 2.300 0 0 1 4.600 0V8" fill="none" stroke="currentColor" strokeWidth="1.300" />
            </svg>
          </button>
          <div className="mr-[9px] ml-3 flex min-w-0 flex-1 flex-col">
            <output className="h-[17px] text-center text-[8px] leading-[17px] text-[#e8e60c]">x1.71</output>
            <input
              type="range"
              aria-label="Speed"
              defaultValue={67}
              className="h-[17px] w-full appearance-none bg-[linear-gradient(#141516,#141516)] bg-size-[100%_2px] bg-center bg-no-repeat [&::-webkit-slider-thumb]:h-4 [&::-webkit-slider-thumb]:w-2 [&::-webkit-slider-thumb]:appearance-none [&::-webkit-slider-thumb]:rounded-[1px] [&::-webkit-slider-thumb]:border [&::-webkit-slider-thumb]:border-[#1f2122] [&::-webkit-slider-thumb]:bg-[#97999a]"
            />
          </div>
        </div>
      </div>
    </section>
  );
}

export default function App() {
  return (
    <div className="h-screen bg-white">
      <div className="flex h-full flex-col overflow-hidden rounded-[8px] bg-[#2b2d2f] font-[Inter,'Noto_Sans_CJK_SC',sans-serif] [font-feature-settings:'calt'_0]">
        <Titlebar />
        <Toolbar />
        <main className="flex min-h-0 flex-1 border-t-2 border-[#202223]">
          <ChannelStrip />
          <TrackPanel />
          <Timeline />
          <VerticalScroll />
          <OutputMeters />
        </main>
        <Transport />
        <footer className="flex h-6 items-start justify-between bg-[#2b2d2f] px-2 pt-1 text-[10px] leading-5 text-[#c4c6c7]">
          <span>Drag parts. CTRL -&gt; Pointer</span>
          <button aria-label="Dismiss hint" className="mr-px">
            <svg viewBox="0 0 10 10" className="size-2.5" aria-hidden="true"><circle cx="5" cy="5" r="5" fill="#dfe1e2" /><path d="M3 3l4 4M7 3L3 7" stroke="#2b2d2f" strokeWidth="1.500" /></svg>
          </button>
        </footer>
      </div>
    </div>
  );
}
